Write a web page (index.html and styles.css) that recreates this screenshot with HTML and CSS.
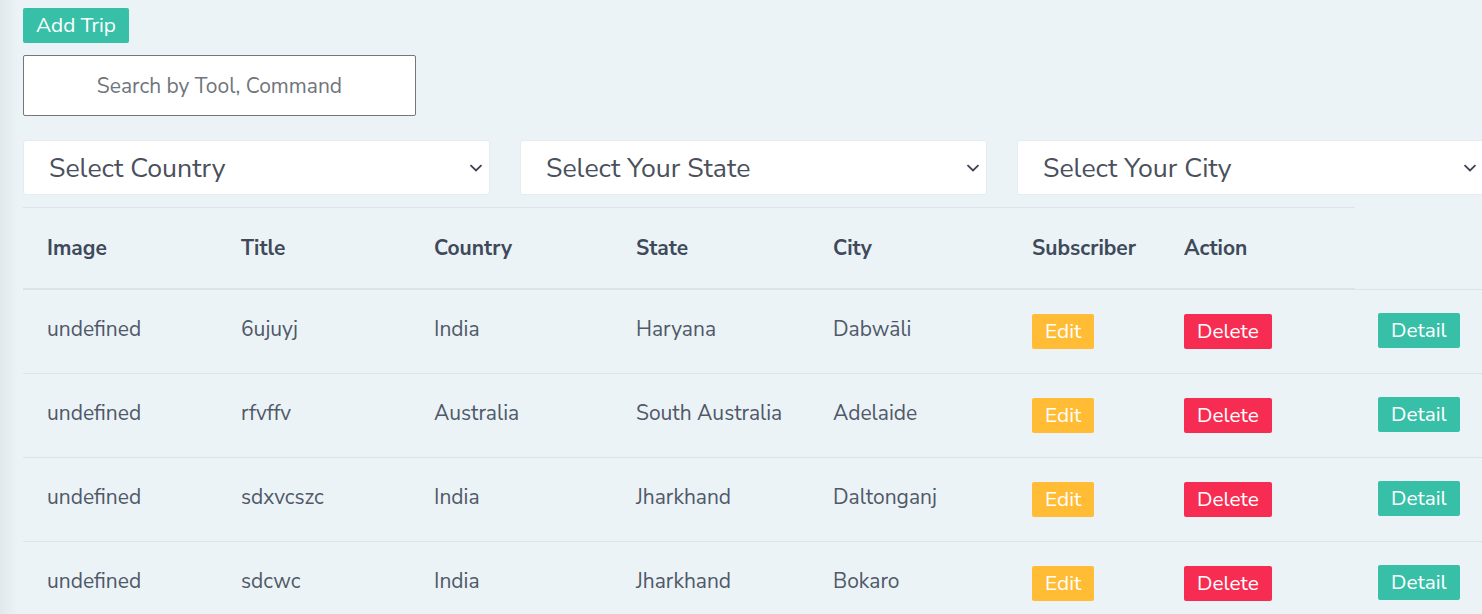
FILE: index.html
```html
<!DOCTYPE html>
<html lang="en">
<head>
<meta charset="utf-8">
<title>Trips</title>
<link rel="stylesheet" href="styles.css">
</head>
<body>
<div class="page">
  <div class="toolbar">
    <button class="btn btn-teal btn-add">Add Trip</button>
  </div>
  <input class="search" type="text" placeholder="Search by Tool, Command">
  <div class="filters">
    <div class="select-wrap">
      <select class="select"><option>Select Country</option></select>
      <svg class="chev" width="14" height="8" viewBox="0 0 14 8"><path d="M1.5 1.2l5.5 5.3 5.5-5.3" fill="none" stroke="#3d4350" stroke-width="1.8"/></svg>
    </div>
    <div class="select-wrap">
      <select class="select"><option>Select Your State</option></select>
      <svg class="chev" width="14" height="8" viewBox="0 0 14 8"><path d="M1.5 1.2l5.5 5.3 5.5-5.3" fill="none" stroke="#3d4350" stroke-width="1.8"/></svg>
    </div>
    <div class="select-wrap">
      <select class="select"><option>Select Your City</option></select>
      <svg class="chev" width="14" height="8" viewBox="0 0 14 8"><path d="M1.5 1.2l5.5 5.3 5.5-5.3" fill="none" stroke="#3d4350" stroke-width="1.8"/></svg>
    </div>
  </div>
  <table class="table">
    <colgroup>
      <col class="c-img"><col class="c-title"><col class="c-country"><col class="c-state"><col class="c-city"><col class="c-sub"><col class="c-act"><col class="c-det">
    </colgroup>
    <thead>
      <tr>
        <th>Image</th><th>Title</th><th>Country</th><th>State</th><th>City</th><th>Subscriber</th><th>Action</th>
      </tr>
    </thead>
    <tbody>
      <tr>
        <td>undefined</td><td>6ujuyj</td><td>India</td><td>Haryana</td><td>Dabwāli</td>
        <td><button class="btn btn-warn">Edit</button></td>
        <td><button class="btn btn-danger">Delete</button></td>
        <td><button class="btn btn-teal">Detail</button></td>
      </tr>
      <tr>
        <td>undefined</td><td>rfvffv</td><td>Australia</td><td>South Australia</td><td>Adelaide</td>
        <td><button class="btn btn-warn">Edit</button></td>
        <td><button class="btn btn-danger">Delete</button></td>
        <td><button class="btn btn-teal">Detail</button></td>
      </tr>
      <tr>
        <td>undefined</td><td>sdxvcszc</td><td>India</td><td>Jharkhand</td><td>Daltonganj</td>
        <td><button class="btn btn-warn">Edit</button></td>
        <td><button class="btn btn-danger">Delete</button></td>
        <td><button class="btn btn-teal">Detail</button></td>
      </tr>
      <tr>
        <td>undefined</td><td>sdcwc</td><td>India</td><td>Jharkhand</td><td>Bokaro</td>
        <td><button class="btn btn-warn">Edit</button></td>
        <td><button class="btn btn-danger">Delete</button></td>
        <td><button class="btn btn-teal">Detail</button></td>
      </tr>
    </tbody>
  </table>
</div>
</body>
</html>
```

FILE: styles.css
```css
html, body {
  margin: 0;
  overflow: hidden;
}
body {
  background: linear-gradient(to right, #e2e9ed 0, #ecf3f7 18px) #ecf3f7;
  font-family: "Nunito Sans", "Nunito", "Open Sans", sans-serif;
  color: #4d5766;
}
.page {
  padding: 8px 0 0 23px;
  width: 1520px;
}
.toolbar {
  display: flex;
}
.btn {
  font-family: "Nunito Sans", "Nunito", "Open Sans", sans-serif;
  font-size: 20.8px;
  line-height: 35px;
  height: 35px;
  padding: 0 13px;
  border: 0;
  border-radius: 2px;
  color: #fff;
  cursor: pointer;
  display: inline-block;
  vertical-align: top;
}
.btn-teal { background: #37bfa7; }
.btn-warn { background: #ffbc34; }
.btn-danger { background: #f72c52; }

.search {
  display: block;
  margin-top: 12px;
  box-sizing: border-box;
  width: 393px;
  height: 61px;
  border: 1px solid #767676;
  border-radius: 2px;
  background: #fff;
  font-family: "Nunito Sans", "Nunito", "Open Sans", sans-serif;
  font-size: 21px;
  text-align: center;
  color: #495057;
  padding: 0 10px;
}
.search::placeholder {
  color: #6f757c;
}
.filters {
  display: flex;
  gap: 30px;
  margin-top: 24px;
}
.select-wrap {
  position: relative;
  flex: 0 0 467px;
  width: 467px;
}
.select {
  appearance: none;
  -webkit-appearance: none;
  display: block;
  width: 100%;
  height: 55px;
  box-sizing: border-box;
  border: 1px solid #e6ebef;
  border-radius: 3px;
  background: #fff;
  font-family: "Nunito Sans", "Nunito", "Open Sans", sans-serif;
  font-size: 26.7px;
  color: #4a505c;
  padding: 0 0 0 25px;
  outline: none;
}
.chev {
  position: absolute;
  right: 7px;
  top: 24px;
}
.table {
  margin-top: 12px;
  border-collapse: collapse;
  table-layout: fixed;
  width: 1482px;
}
.c-img { width: 194px; }
.c-title { width: 193px; }
.c-country { width: 202px; }
.c-state { width: 197px; }
.c-city { width: 199px; }
.c-sub { width: 152px; }
.c-act { width: 195px; }
.c-det { width: 150px; }
.table th, .table td {
  padding: 24px;
  text-align: left;
  vertical-align: top;
  line-height: 31px;
  white-space: nowrap;
  border-top: 1px solid #dde3e7;
}
.table th {
  font-size: 21px;
  font-weight: 700;
  color: #3e4a5a;
  line-height: 32px;
  border-bottom: 2px solid #dde3e7;
}
.table td {
  font-size: 21px;
  color: #4f5968;
}
.table td:last-child {
  padding-top: 23px;
  padding-left: 23px;
}
```
